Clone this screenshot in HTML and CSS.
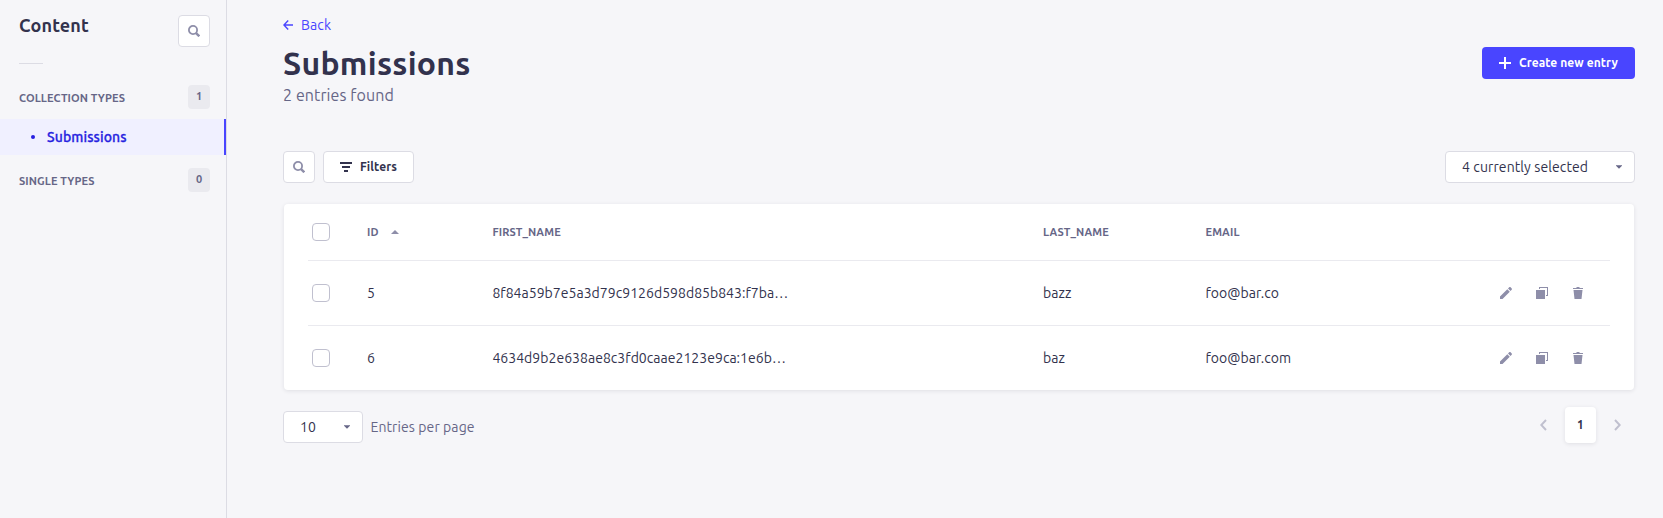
FILE: index.html
```
<!DOCTYPE html>
<html lang="en">
<head>
<meta charset="utf-8">
<title>Submissions</title>
<link rel="stylesheet" href="styles.css">
</head>
<body>
<svg class="sprite" aria-hidden="true">
  <symbol id="search" viewBox="0 0 12 12"><circle cx="5" cy="5" r="4.1" fill="none" stroke="currentColor" stroke-width="1.8"/><path d="M7.8 7.8l3.5 3.5" stroke="currentColor" stroke-width="2.4"/></symbol>
  <symbol id="caret" viewBox="0 0 6 4"><path d="M0 .3h6v.5L3 3.7 0 .8z" fill="currentColor"/></symbol>
  <symbol id="pencil" viewBox="0 0 12 12"><path d="M0 9.5 7.3 2.2l2.5 2.5L2.5 12H0zM8 1.5 9.2.3c.4-.4 1-.4 1.4 0l1.1 1.1c.4.4.4 1 0 1.4L10.5 4z" fill="currentColor"/></symbol>
  <symbol id="copy" viewBox="0 0 12 12"><path d="M0 3h9v9H0zM3 0h9v9h-2V8h1V1H4v1H3z" fill="currentColor"/></symbol>
  <symbol id="trash" viewBox="0 0 12 12"><path d="M1 1h3.5V0h3v1H11v1H1zM1.5 3h9l-1 9h-7z" fill="currentColor"/></symbol>
</svg>
<div class="app">
  <nav class="sidebar">
    <div class="sidebar-head">
      <h2 class="sidebar-title">Content</h2>
      <button class="icon-button"><svg class="icon"><use href="#search"/></svg></button>
    </div>
    <div class="divider"></div>
    <div class="group"><span class="group-label">COLLECTION TYPES</span><span class="badge">1</span></div>
    <a class="nav-link"><span class="bullet"></span><span class="nav-text">Submissions</span></a>
    <div class="group"><span class="group-label">SINGLE TYPES</span><span class="badge">0</span></div>
  </nav>
  <main class="main">
    <a class="back"><svg class="back-icon" viewBox="0 0 10 10"><path d="M5.2.6.9 5l4.3 4.4M1 5h9" fill="none" stroke="currentColor" stroke-width="1.4"/></svg><span class="back-text">Back</span></a>
    <header class="header">
      <div>
        <h1 class="title">Submissions</h1>
        <p class="subtitle">2 entries found</p>
      </div>
      <button class="create"><svg class="icon" viewBox="0 0 12 12"><path d="M6 0v12M0 6h12" stroke="#fff" stroke-width="2"/></svg><span>Create new entry</span></button>
    </header>
    <div class="toolbar">
      <button class="icon-button"><svg class="icon"><use href="#search"/></svg></button>
      <button class="filters"><svg class="icon" viewBox="0 0 12 12"><path d="M0 2h12M2 6h8M4 10h4" stroke="currentColor" stroke-width="2"/></svg><span>Filters</span></button>
      <div class="select columns"><span>4 currently selected</span><svg class="caret"><use href="#caret"/></svg></div>
    </div>
    <section class="table">
      <div class="row head">
        <span class="checkbox"></span>
        <span class="id-head"><span>ID</span><svg class="sort" viewBox="0 0 8 4"><path d="M0 4h8L4 0z" fill="currentColor"/></svg></span>
        <span>FIRST_NAME</span><span>LAST_NAME</span><span>EMAIL</span>
      </div>
      <div class="row">
        <span class="checkbox"></span><span>5</span><span class="hash">8f84a59b7e5a3d79c9126d598d85b843:f7ba…</span><span>bazz</span><span>foo@bar.co</span>
        <span class="actions"><svg class="icon"><use href="#pencil"/></svg><svg class="icon"><use href="#copy"/></svg><svg class="icon"><use href="#trash"/></svg></span>
      </div>
      <div class="row">
        <span class="checkbox"></span><span>6</span><span class="hash">4634d9b2e638ae8c3fd0caae2123e9ca:1e6b…</span><span>baz</span><span>foo@bar.com</span>
        <span class="actions"><svg class="icon"><use href="#pencil"/></svg><svg class="icon"><use href="#copy"/></svg><svg class="icon"><use href="#trash"/></svg></span>
      </div>
    </section>
    <footer class="footer">
      <div class="select size"><span>10</span><svg class="caret"><use href="#caret"/></svg></div>
      <span class="per-page">Entries per page</span>
      <div class="pages">
        <svg class="chevron" viewBox="0 0 7 12"><path d="M6 1 1.3 6 6 11" fill="none" stroke="currentColor" stroke-width="2"/></svg>
        <span class="page">1</span>
        <svg class="chevron" viewBox="0 0 7 12"><path d="M1 1l4.7 5L1 11" fill="none" stroke="currentColor" stroke-width="2"/></svg>
      </div>
    </footer>
  </main>
</div>
</body>
</html>
```
FILE: styles.css
```
* { box-sizing: border-box; }
body { margin: 0; background: #f6f6f9; color: #32324d; font: 14px/20px Ubuntu, "Noto Sans", sans-serif; white-space: nowrap; }
h1, h2, p { margin: 0; }
button { font: inherit; padding: 0; }
svg { display: block; flex: none; }
.sprite { display: none; }
.app { display: flex; height: 518px; overflow: hidden; }
.sidebar { width: 227px; flex: none; border-right: 1px solid #dcdce4; padding-top: 15px; }
.sidebar-head { display: flex; justify-content: space-between; align-items: flex-start; padding: 0 16px 0 19px; }
.sidebar-title { font-size: 18px; line-height: 20px; font-weight: 700; letter-spacing: .15px; }
.icon { width: 12px; height: 12px; }
.icon-button { width: 32px; height: 32px; display: flex; align-items: center; justify-content: center; background: #fff; border: 1px solid #dcdce4; border-radius: 4px; color: #8e8ea9; }
.divider { width: 24px; height: 1px; background: #dcdce4; margin: 16px 0 21px 19px; }
.group { height: 24px; display: flex; align-items: center; justify-content: space-between; padding: 0 16px 0 19px; color: #666687; font-size: 11px; font-weight: 700; }
.group-label { padding-top: 2px; letter-spacing: .1px; }
.badge { width: 22px; height: 24px; border-radius: 4px; background: #eaeaef; text-align: center; line-height: 22px; }
.nav-link { display: flex; align-items: center; height: 36px; margin: 10px 0 13px; padding-left: 31px; gap: 12px; background: #f0f0ff; border-right: 2px solid #4945ff; color: #271fe0; font-weight: 500; }
.nav-text { letter-spacing: .1px; -webkit-text-stroke: .3px currentColor; }
.bullet { width: 4px; height: 4px; border-radius: 50%; background: #271fe0; }
.main { flex: 1; padding: 15px 28px 0 56px; }
.back { display: flex; align-items: center; gap: 8px; height: 20px; color: #4945ff; letter-spacing: .1px; }
.back-icon { width: 10px; height: 10px; }
.header { display: flex; justify-content: space-between; height: 116px; padding-top: 8px; }
.title { font-size: 32px; line-height: 40px; letter-spacing: .27px; }
.subtitle { font-size: 16px; line-height: 24px; color: #666687; letter-spacing: .1px; }
.create { width: 153px; height: 32px; margin-top: 4px; display: flex; align-items: center; gap: 8px; padding-left: 17px; border: 0; border-radius: 4px; background: #4945ff; color: #fff; font-size: 12px; font-weight: 700; letter-spacing: .08px; }
.toolbar { display: flex; gap: 8px; height: 32px; }
.filters { width: 91px; display: flex; align-items: center; gap: 8px; padding-left: 16px; border: 1px solid #dcdce4; border-radius: 4px; background: #fff; color: #32324d; font-size: 12px; font-weight: 700; letter-spacing: .12px; }
.select { height: 32px; display: flex; align-items: center; justify-content: space-between; background: #fff; border: 1px solid #dcdce4; border-radius: 4px; }
.columns { width: 190px; margin-left: auto; padding: 0 12px 0 16px; letter-spacing: .1px; }
.caret { width: 6px; height: 4px; color: #666687; }
.table { margin: 21px 1px 0; padding: 0 24px; background: #fff; border-radius: 4px; box-shadow: 0 1px 4px rgba(33, 33, 52, .1); }
.row { display: grid; grid-template-columns: 59px 125.4px 550.6px 162.5px 294.5px 1fr; align-items: center; height: 65px; border-bottom: 1px solid #eaeaef; letter-spacing: .04px; }
.row:last-child { height: 64px; border-bottom: 0; }
.head { height: 57px; color: #666687; font-size: 11px; font-weight: 700; letter-spacing: .13px; }
.hash { letter-spacing: .03px; }
.checkbox { width: 18px; height: 18px; margin-left: 4px; border: 1px solid #c0c0cf; border-radius: 4px; }
.id-head { display: flex; align-items: center; gap: 12px; }
.sort { width: 8px; height: 4px; color: #8e8ea9; }
.actions { display: flex; gap: 24px; color: #8e8ea9; }
.footer { display: flex; align-items: flex-start; padding-top: 17px; }
.size { width: 80px; margin-top: 4px; padding: 0 12px 0 16px; letter-spacing: .2px; }
.per-page { margin: 10px 0 0 7.5px; color: #666687; letter-spacing: .09px; }
.pages { display: flex; align-items: center; gap: 18px; margin-left: auto; padding-right: 14px; color: #c0c0cf; }
.chevron { width: 7px; height: 12px; }
.page { width: 31px; height: 36px; border-radius: 4px; background: #fff; box-shadow: 0 1px 4px rgba(33, 33, 52, .1); color: #32324d; font-size: 12px; font-weight: 700; line-height: 36px; text-align: center; }
```
